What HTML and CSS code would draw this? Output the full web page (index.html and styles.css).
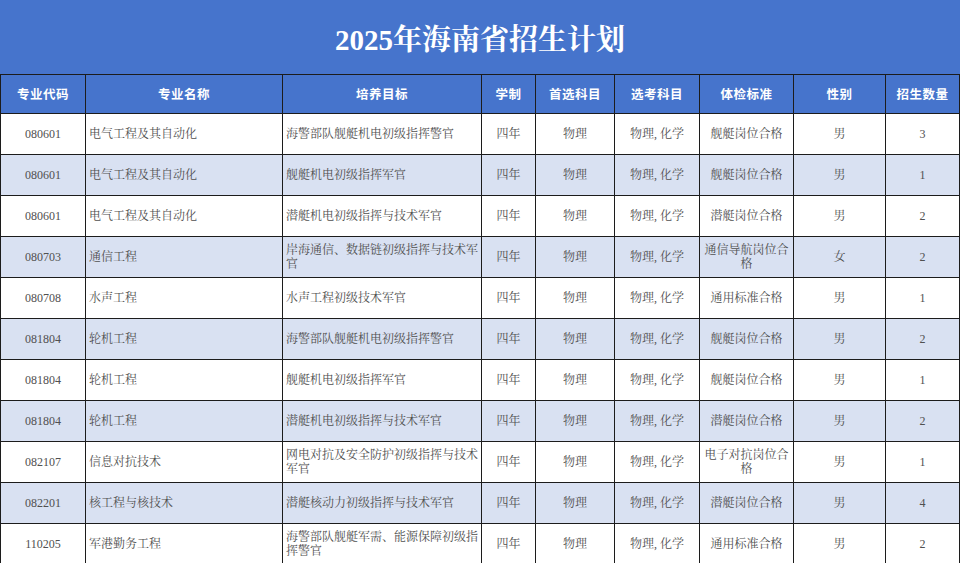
FILE: index.html
```html
<!DOCTYPE html>
<html lang="zh-CN">
<head>
<meta charset="utf-8">
<link rel="stylesheet" href="styles.css">
</head>
<body>
<div class="page">
  <header class="title-bar"><h1 class="title">2025年海南省招生计划</h1></header>
  <table class="plan">
    <colgroup>
      <col class="c1"><col class="c2"><col class="c3"><col class="c4"><col class="c5"><col class="c6"><col class="c7"><col class="c8"><col class="c9">
    </colgroup>
    <thead>
      <tr><th>专业代码</th><th>专业名称</th><th>培养目标</th><th>学制</th><th>首选科目</th><th>选考科目</th><th>体检标准</th><th>性别</th><th>招生数量</th></tr>
    </thead>
    <tbody>
      <tr><td class="num">080601</td><td class="left">电气工程及其自动化</td><td class="left">海警部队舰艇机电初级指挥警官</td><td>四年</td><td>物理</td><td>物理, 化学</td><td>舰艇岗位合格</td><td>男</td><td class="num">3</td></tr>
      <tr class="alt"><td class="num">080601</td><td class="left">电气工程及其自动化</td><td class="left">舰艇机电初级指挥军官</td><td>四年</td><td>物理</td><td>物理, 化学</td><td>舰艇岗位合格</td><td>男</td><td class="num">1</td></tr>
      <tr><td class="num">080601</td><td class="left">电气工程及其自动化</td><td class="left">潜艇机电初级指挥与技术军官</td><td>四年</td><td>物理</td><td>物理, 化学</td><td>潜艇岗位合格</td><td>男</td><td class="num">2</td></tr>
      <tr class="alt"><td class="num">080703</td><td class="left">通信工程</td><td class="left">岸海通信、数据链初级指挥与技术军官</td><td>四年</td><td>物理</td><td>物理, 化学</td><td>通信导航岗位合格</td><td>女</td><td class="num">2</td></tr>
      <tr><td class="num">080708</td><td class="left">水声工程</td><td class="left">水声工程初级技术军官</td><td>四年</td><td>物理</td><td>物理, 化学</td><td>通用标准合格</td><td>男</td><td class="num">1</td></tr>
      <tr class="alt"><td class="num">081804</td><td class="left">轮机工程</td><td class="left">海警部队舰艇机电初级指挥警官</td><td>四年</td><td>物理</td><td>物理, 化学</td><td>舰艇岗位合格</td><td>男</td><td class="num">2</td></tr>
      <tr><td class="num">081804</td><td class="left">轮机工程</td><td class="left">舰艇机电初级指挥军官</td><td>四年</td><td>物理</td><td>物理, 化学</td><td>舰艇岗位合格</td><td>男</td><td class="num">1</td></tr>
      <tr class="alt"><td class="num">081804</td><td class="left">轮机工程</td><td class="left">潜艇机电初级指挥与技术军官</td><td>四年</td><td>物理</td><td>物理, 化学</td><td>潜艇岗位合格</td><td>男</td><td class="num">2</td></tr>
      <tr><td class="num">082107</td><td class="left">信息对抗技术</td><td class="left">网电对抗及安全防护初级指挥与技术军官</td><td>四年</td><td>物理</td><td>物理, 化学</td><td>电子对抗岗位合格</td><td>男</td><td class="num">1</td></tr>
      <tr class="alt"><td class="num">082201</td><td class="left">核工程与核技术</td><td class="left">潜艇核动力初级指挥与技术军官</td><td>四年</td><td>物理</td><td>物理, 化学</td><td>潜艇岗位合格</td><td>男</td><td class="num">4</td></tr>
      <tr><td class="num">110205</td><td class="left">军港勤务工程</td><td class="left">海警部队舰艇军需、能源保障初级指挥警官</td><td>四年</td><td>物理</td><td>物理, 化学</td><td>通用标准合格</td><td>男</td><td class="num">2</td></tr>
    </tbody>
  </table>
</div>
</body>
</html>
```

FILE: styles.css
```css
html, body {
  margin: 0;
  padding: 0;
  background: #ffffff;
}
.page {
  width: 960px;
  height: 563px;
  overflow: hidden;
  background: #ffffff;
}
.title-bar {
  height: 74px;
  background: #4674cc;
  display: flex;
  align-items: center;
  justify-content: center;
}
.title {
  margin: 0;
  color: #ffffff;
  font-family: "Liberation Serif", "Noto Serif CJK SC", "Noto Sans CJK SC", serif;
  font-weight: 700;
  font-size: 29px;
  letter-spacing: 0;
}
.plan {
  border-collapse: collapse;
  table-layout: fixed;
  width: 959px;
  font-family: "Liberation Serif", "Noto Serif CJK SC", "Noto Sans CJK SC", serif;
  font-size: 12px;
  color: #505050;
}
.c1 { width: 85px; }
.c2 { width: 197px; }
.c3 { width: 199px; }
.c4 { width: 54px; }
.c5 { width: 79px; }
.c6 { width: 85px; }
.c7 { width: 94px; }
.c8 { width: 92px; }
.c9 { width: 74px; }
.plan th, .plan td {
  border: 1.5px solid #1c1c1c;
  text-align: center;
  vertical-align: middle;
  padding: 0 2px;
  line-height: 14px;
}
.plan thead th {
  height: 38px;
  background: #4674cc;
  color: #ffffff;
  font-family: "Noto Sans CJK SC", sans-serif;
  font-weight: 700;
  font-size: 12.5px;
  letter-spacing: 0.5px;
}
.plan tbody td {
  height: 40px;
}
.plan tbody tr.alt td {
  background: #d9e1f2;
}
.plan td.left {
  text-align: left;
  padding-left: 3px;
}
```
